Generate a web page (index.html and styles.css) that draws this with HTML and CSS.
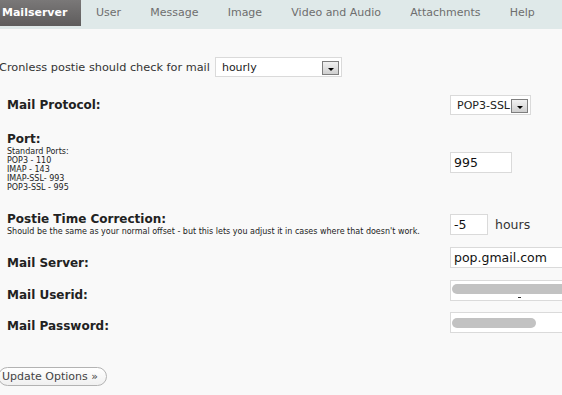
FILE: index.html
```html
<!DOCTYPE html>
<html lang="en">
<head>
    <meta charset="UTF-8">
    <title>Postie Options</title>
    <link rel="stylesheet" href="styles.css">
</head>
<body>
    <ul class="tabs">
        <li class="tab active">Mailserver</li>
        <li class="tab">User</li>
        <li class="tab">Message</li>
        <li class="tab">Image</li>
        <li class="tab">Video and Audio</li>
        <li class="tab">Attachments</li>
        <li class="tab">Help</li>
    </ul>

    <div class="page">
        <div class="cron">
            <span>Cronless postie should check for mail</span>
            <span class="select select-cron">hourly<span class="drop"></span></span>
        </div>

        <div class="row row-protocol">
            <div class="label">Mail Protocol:</div>
            <div class="field"><span class="select select-proto">POP3-SSL<span class="drop"></span></span></div>
        </div>

        <div class="row row-port">
            <div class="label">
                Port:
                <div class="note">Standard Ports:<br>POP3 - 110<br>IMAP - 143<br>IMAP-SSL- 993<br>POP3-SSL - 995</div>
            </div>
            <div class="field"><span class="input input-port">995</span></div>
        </div>

        <div class="row row-time">
            <div class="label">
                Postie Time Correction:
                <div class="note">Should be the same as your normal offset - but this lets you adjust it in cases where that doesn't work.</div>
            </div>
            <div class="field"><span class="input input-time">-5</span><span class="unit">hours</span></div>
        </div>

        <div class="row row-server">
            <div class="label">Mail Server:</div>
            <div class="field"><span class="input input-wide">pop.gmail.com</span></div>
        </div>

        <div class="row row-user">
            <div class="label">Mail Userid:</div>
            <div class="field"><span class="input input-wide"><span class="blur blur-user"></span><span class="tick"></span></span></div>
        </div>

        <div class="row row-pass">
            <div class="label">Mail Password:</div>
            <div class="field"><span class="input input-wide"><span class="blur blur-pass"></span></span></div>
        </div>

        <button class="update">Update Options &raquo;</button>
    </div>
</body>
</html>
```

FILE: styles.css
```css
body {
    margin: 0;
    padding: 0;
    background-color: #f9f9f9;
    font-family: "DejaVu Sans", Verdana, sans-serif;
    color: #333;
    overflow: hidden;
}
.tabs {
    list-style: none;
    margin: 0;
    padding: 0;
    height: 29px;
    background-color: #dfe9e9;
    display: flex;
    overflow: hidden;
}
.tab {
    flex-shrink: 0;
    padding: 0 14.6px;
    height: 26px;
    line-height: 26px;
    font-size: 11px;
    color: #6e6e6e;
    white-space: nowrap;
}
.tab.active {
    margin-left: -12px;
    padding: 0 14px 0 14px;
    background: linear-gradient(#7a7878, #5e5c5c);
    color: #fff;
    font-weight: bold;
}
.page {
    padding-left: 7px;
}
.cron {
    margin: 28px 0 0 -8px;
    display: flex;
    align-items: center;
    font-size: 11.3px;
    color: #333;
    height: 20px;
}
.select {
    position: relative;
    display: inline-block;
    flex-shrink: 0;
    box-sizing: border-box;
    height: 20px;
    line-height: 20px;
    background-color: #fff;
    border: 1px solid #dadada;
    font-size: 11px;
    color: #222;
    padding-left: 6px;
}
.select-cron {
    width: 127px;
    margin-left: 5px;
}
.select-proto {
    width: 81px;
}
.drop {
    position: absolute;
    right: 2px;
    top: 3px;
    width: 15px;
    height: 12px;
    border: 1px solid #7e7e7e;
    background: linear-gradient(#f1f1f1, #cfcfcf);
}
.drop::after {
    content: "";
    position: absolute;
    left: 5px;
    top: 6px;
    border-left: 3px solid transparent;
    border-right: 3px solid transparent;
    border-top: 3px solid #000;
}
.row {
    display: flex;
    align-items: flex-start;
}
.label {
    flex-shrink: 0;
    width: 443px;
    font-size: 12px;
    line-height: 16px;
    font-weight: bold;
    color: #222;
}
.note {
    font-size: 8px;
    font-weight: normal;
    line-height: 9px;
    color: #222;
    white-space: nowrap;
}
.field {
    flex-shrink: 0;
    display: flex;
    align-items: center;
}
.input {
    position: relative;
    display: inline-block;
    box-sizing: border-box;
    height: 21px;
    line-height: 19px;
    border: 1px solid #dadada;
    background-color: #fff;
    font-size: 12.5px;
    color: #111;
    padding-left: 3px;
    overflow: hidden;
}
.input-port {
    width: 62px;
}
.input-time {
    width: 38px;
}
.input-wide {
    width: 120px;
}
.unit {
    margin-left: 7px;
    font-size: 12.5px;
    color: #333;
}
.row-protocol {
    margin-top: 18px;
    height: 20px;
    align-items: center;
}
.row-port {
    margin-top: 16px;
}
.row-port .field {
    margin-top: 21px;
}
.row-time {
    margin-top: 19px;
}
.row-time .field {
    margin-top: 3px;
}
.row-server {
    margin-top: 11px;
}
.row-server .label {
    padding-top: 8px;
}
.row-user {
    margin-top: 9px;
}
.row-user .label {
    padding-top: 7px;
}
.row-pass {
    margin-top: 9px;
}
.row-pass .label {
    padding-top: 6px;
}
.blur {
    position: absolute;
    left: 1px;
    height: 10px;
    border-radius: 5px;
    background-color: #c2c2c2;
}
.blur-user {
    top: 3px;
    width: 130px;
}
.blur-pass {
    top: 5px;
    width: 84px;
}
.tick {
    position: absolute;
    left: 67px;
    top: 16px;
    width: 3px;
    height: 1px;
    background-color: #333;
}
.update {
    display: block;
    margin: 33px 0 0 -9px;
    box-sizing: border-box;
    height: 19px;
    width: 109px;
    padding: 0 0 0 3px;
    text-align: left;
    border: 1px solid #b3b3b3;
    border-radius: 10px;
    background: linear-gradient(#ffffff, #f0f0f0);
    font-family: "DejaVu Sans", Verdana, sans-serif;
    font-size: 11px;
    color: #444;
}
```
